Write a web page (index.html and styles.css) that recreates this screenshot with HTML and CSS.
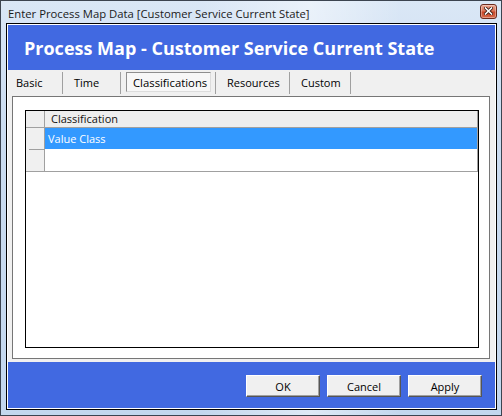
FILE: index.html
```html
<!DOCTYPE html>
<html lang="en">
<head>
<meta charset="utf-8">
<title>Enter Process Map Data</title>
<link rel="stylesheet" href="styles.css">
</head>
<body>
<div class="window">
  <div class="titlebar">
    <span class="caption">Enter Process Map Data [Customer Service Current State]</span>
    <button class="close" type="button" aria-label="Close">
      <svg width="9" height="8" viewBox="0 0 9 8">
        <path d="M1.5 1 L7.5 7 M7.5 1 L1.5 7" stroke="#3a1810" stroke-width="3.2" stroke-linecap="square"/>
        <path d="M1.5 1 L7.5 7 M7.5 1 L1.5 7" stroke="#ffffff" stroke-width="1.6" stroke-linecap="square"/>
      </svg>
    </button>
  </div>
  <div class="client">
    <header class="banner">
      <h1>Process Map - Customer Service Current State</h1>
    </header>
    <section class="content">
      <nav class="tabs">
        <div class="tab">Basic</div>
        <div class="tab">Time</div>
        <div class="tab tab-active"><span>Classifications</span></div>
        <div class="tab">Resources</div>
        <div class="tab">Custom</div>
      </nav>
      <div class="panel">
        <div class="grid">
          <div class="sheet">
            <div class="rowhead rowhead-corner"></div>
            <div class="colhead">Classification</div>
            <div class="rowhead rowhead-first"></div>
            <div class="cell cell-selected">Value Class</div>
            <div class="rowhead"></div>
            <div class="cell"></div>
          </div>
        </div>
      </div>
    </section>
    <footer class="actions">
      <button class="btn" type="button">OK</button>
      <button class="btn" type="button">Cancel</button>
      <button class="btn" type="button">Apply</button>
    </footer>
  </div>
</div>
</body>
</html>
```
FILE: styles.css
```css
* {
  box-sizing: border-box;
}

html, body {
  margin: 0;
  padding: 0;
}

body {
  font-family: "Open Sans", "Noto Sans", sans-serif;
  font-size: 11px;
  color: #000;
  background: #ffffff;
}

/* window frame */
.window {
  width: 502px;
  height: 416px;
  border: 1px solid #3c4450;
  padding: 0 4px 5px 5px;
  display: flex;
  flex-direction: column;
  background:
    linear-gradient(90deg, rgba(255,255,255,0) 40%, rgba(255,255,255,0.45) 62%, rgba(255,255,255,0) 80%),
    linear-gradient(180deg, #dae7f6 0%, #cbdcf0 30%, #c3d7ee 100%);
}

.titlebar {
  height: 22px;
  display: flex;
  align-items: center;
  padding: 2px 0 0 2px;
}

.caption {
  color: #1a1a1a;
  font-size: 11.3px;
  white-space: nowrap;
}

.close {
  margin: -4px 0 0 auto;
  width: 17px;
  height: 15px;
  padding: 0;
  border: 1px solid #6b2a1e;
  border-radius: 3px;
  background: linear-gradient(180deg, #eaa48f 0%, #db7458 45%, #c8472a 55%, #d86a4c 100%);
  box-shadow: inset 0 0 0 1px rgba(255,255,255,0.35);
  display: flex;
  align-items: center;
  justify-content: center;
}

.close svg {
  display: block;
}

/* client area */
.client {
  flex: 1;
  border: 1px solid #000;
  padding: 1px;
  background: #fff;
  display: flex;
  flex-direction: column;
}

.banner {
  height: 45px;
  background: #4169e1;
  display: flex;
  align-items: center;
  padding: 0 0 0 16px;
}

.banner h1 {
  margin: 0;
  color: #fff;
  font-size: 18px;
  font-weight: 700;
  white-space: nowrap;
}

.content {
  height: 292px;
  background: #f0f0f0;
  padding: 0 5px 3px 4px;
  display: flex;
  flex-direction: column;
}

/* tab strip */
.tabs {
  height: 26px;
  display: grid;
  grid-template-columns: 51px 58px 95px 74px 61px;
  align-items: start;
}

.tab {
  margin-top: 2px;
  height: 22px;
  border-right: 1px solid #a0a0a0;
  padding-left: 11px;
  line-height: 21px;
  white-space: nowrap;
}

.tab:first-child {
  padding-left: 4px;
}

.tab-active {
  padding-left: 5px;
}

.tab-active span {
  display: block;
  width: 85px;
  height: 20px;
  line-height: 19px;
  padding-left: 6px;
  border: 1px solid;
  border-color: #8e8e8e #dcdcdc #dcdcdc #8e8e8e;
  background: #f7f7f7;
  font-size: 11.3px;
}

/* tab page */
.panel {
  flex: 1;
  border: 1px solid #767676;
  background: #fff;
  padding: 13px 10px 10px 12px;
  display: flex;
}

.grid {
  flex: 1;
  border: 1px solid #000;
  background: #fff;
}

.sheet {
  display: grid;
  grid-template-columns: 19px 1fr;
  grid-template-rows: 17px 22px 21px;
  border-right: 1px solid #a0a0a0;
  border-bottom: 1px solid #a0a0a0;
}

.rowhead {
  background: #f0f0f0;
  border-right: 1px solid #a0a0a0;
}

.rowhead-corner,
.colhead {
  background: #eeeeee;
  border-bottom: 1px solid #a0a0a0;
}

.rowhead-first {
  background:
    linear-gradient(#a0a0a0, #a0a0a0) 3px 100% / 16px 1px no-repeat,
    #f0f0f0;
}

.colhead {
  padding-left: 6px;
  line-height: 16px;
  color: #111;
}

.cell {
  padding-left: 3px;
  line-height: 21px;
}

.cell-selected {
  background: #3399ff linear-gradient(#fff, #fff) 0 100% / 100% 1px no-repeat;
  color: #fff;
}

/* footer buttons */
.actions {
  flex: 1;
  background: #4169e1;
  display: flex;
  justify-content: flex-end;
  align-items: flex-start;
  gap: 7px;
  padding: 13px 13px 0 0;
}

.btn {
  width: 74px;
  height: 22px;
  padding: 0;
  font-family: inherit;
  font-size: 11px;
  color: #000;
  background: #f0f0f0;
  border: 1px solid;
  border-color: #ffffff #555555 #555555 #ffffff;
  box-shadow: inset -1px -1px 0 #a0a0a0;
}
```
